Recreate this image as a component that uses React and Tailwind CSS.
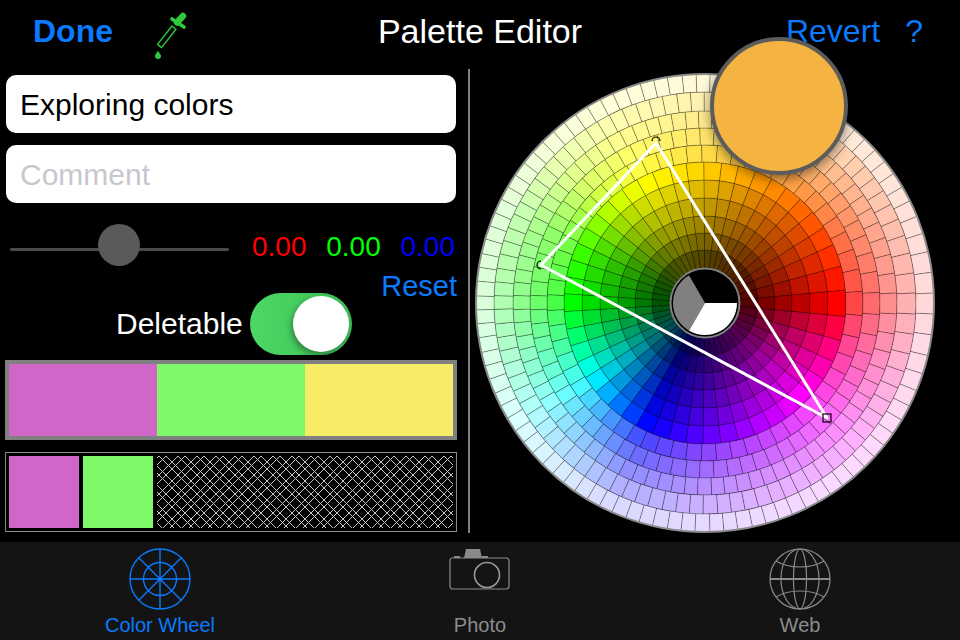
const BLUE = "#0a7aff";

// wheel angle (deg, counter clockwise from the right) -> hue
const HUE_KEYS = [
  [0, 0], [43, 24], [88, 48], [117, 60], [135, 75], [156, 105], [180, 120],
  [210, 175], [245, 240], [270, 262], [317, 300], [340, 330], [360, 360],
];

// inner radius, outer radius, tint (towards white), value, cells
const RINGS = [
  [35, 53, 0, 0.33, 48],
  [53, 70, 0, 0.48, 48],
  [70, 87, 0, 0.62, 48],
  [87, 105, 0, 0.75, 48],
  [105, 123, 0, 0.87, 48],
  [123, 141, 0, 1, 48],
  [141, 158, 0.28, 1, 60],
  [158, 175, 0.42, 1, 72],
  [175, 192, 0.56, 1, 84],
  [192, 211, 0.69, 1, 90],
  [211, 229, 0.85, 1, 96],
];

const hueAt = (angle) => {
  for (let i = 1; i < HUE_KEYS.length; i++) {
    const [a0, h0] = HUE_KEYS[i - 1];
    const [a1, h1] = HUE_KEYS[i];
    if (angle <= a1) return h0 + ((angle - a0) / (a1 - a0)) * (h1 - h0);
  }
  return 0;
};

const cellColor = (hue, tint, value) => {
  const f = (n) => {
    const k = (n + hue / 60) % 6;
    return 1 - Math.max(0, Math.min(k, 4 - k, 1));
  };
  const ch = (n) => Math.round(255 * (f(n) * value * (1 - tint) + tint));
  return `rgb(${ch(5)},${ch(3)},${ch(1)})`;
};

// cells are a bit wider around red
const stepAt = (a) => {
  const d = Math.min(a, 360 - a);
  return 1 + 0.5 * Math.exp(-((d / 25) ** 2));
};

const ringAngles = (count) => {
  let total = 0;
  for (let a = 0; a < 360; a += 0.25) total += 0.25 / stepAt(a);
  const angles = [];
  let acc = 0;
  let next = 0.5;
  for (let a = 0; a < 360; a += 0.25) {
    acc += 0.25 / stepAt(a);
    if ((acc / total) * count >= next) {
      angles.push(a);
      next += 1;
    }
  }
  return angles;
};

const pt = (r, a) => {
  const rad = (a * Math.PI) / 180;
  return `${(230 + r * Math.cos(rad)).toFixed(2)} ${(230 - r * Math.sin(rad)).toFixed(2)}`;
};

const wedge = (r0, r1, a0, a1) =>
  `M${pt(r0, a0)}L${pt(r1, a0)}A${r1} ${r1} 0 0 0 ${pt(r1, a1)}L${pt(r0, a1)}A${r0} ${r0} 0 0 1 ${pt(r0, a0)}Z`;

const ColorWheel = () => {
  const cells = [];
  RINGS.forEach(([r0, r1, tint, value, count]) => {
    const angles = ringAngles(count);
    angles.forEach((a0, i) => {
      const a1 = i === angles.length - 1 ? angles[0] + 360 : angles[i + 1];
      cells.push(
        <path
          key={`${r0}-${i}`}
          d={wedge(r0, r1, a0, a1)}
          fill={cellColor(hueAt(((a0 + a1) / 2) % 360), tint, value)}
          stroke="#000"
          strokeOpacity="0.3"
          strokeWidth="0.8"
        />
      );
    });
  });

  return (
    <svg width="460" height="460" viewBox="0 0 460 460" className="block">
      {cells}
      <circle cx="230" cy="230" r="229" fill="none" stroke="#8a8a8a" strokeWidth="2" />
      {/* brightness disc */}
      <circle cx="230" cy="230" r="35" fill="#000" />
      <path d={`M230 230L${pt(32, 0)}A32 32 0 0 0 ${pt(32, 120)}Z`} fill="#000" />
      <path d={`M230 230L${pt(32, 120)}A32 32 0 0 0 ${pt(32, 240)}Z`} fill="#808080" />
      <path d={`M230 230L${pt(32, 240)}A32 32 0 0 0 ${pt(32, 360)}Z`} fill="#fff" />
      <circle cx="230" cy="230" r="34.5" fill="none" stroke="#808080" strokeWidth="2" />
      {/* picked colors */}
      <path d="M181 70L66 192L352 345Z" fill="none" stroke="#fff" strokeWidth="3" strokeLinejoin="round" />
      <path d="M177 68A4 4 0 0 1 185 68" fill="none" stroke="#000" strokeWidth="1.2" />
      <path d="M66 196A4 4 0 0 1 66 188" fill="none" stroke="#000" strokeWidth="1.2" />
      <rect x="348" y="341" width="8" height="8" fill="none" stroke="#000" strokeWidth="1.2" />
    </svg>
  );
};

const Dropper = () => (
  <svg width="40" height="50" viewBox="150 5 40 50" className="block">
    <path d="M177 24.2L173 21L158.5 39.4L162.5 42.6Z" fill="none" stroke="#2fc83c" strokeWidth="1.4" strokeLinejoin="round" />
    <path d="M173 14L185 22" stroke="#2fc83c" strokeWidth="3.6" strokeLinecap="round" />
    <path d="M178 17.5L184 11" stroke="#2fc83c" strokeWidth="6.4" strokeLinecap="round" />
    <path d="M159 45.5C160 48 162 49.2 162 51A3 3 0 0 1 156 51C156 49.2 158 48 159 45.5Z" fill="#2fc83c" />
  </svg>
);

const Hatch = () => {
  const offsets = [];
  for (let i = 0; i < 52; i++) offsets.push(i * 19, i * 19 + 7);
  return (
    <svg width="296" height="72" viewBox="0 0 296 72" className="block">
      {offsets.map((o) => (
        <g key={o} stroke="#c4c4c4" strokeWidth="1">
          <path d={`M${o - 76} -2L${o} 74`} />
          <path d={`M${o + 4} -2L${o - 72} 74`} />
        </g>
      ))}
    </svg>
  );
};

const WheelIcon = () => (
  <svg width="62" height="62" viewBox="0 0 62 62" fill="none" stroke={BLUE} strokeWidth="1.4" className="block">
    <circle cx="31" cy="31" r="30" />
    <circle cx="31" cy="31" r="16.5" />
    <path d="M31 1V61M1 31H61M10 10L52 52M52 10L10 52" />
    <circle cx="31" cy="31" r="1.5" fill={BLUE} stroke="none" />
  </svg>
);

const PhotoIcon = () => (
  <svg width="62" height="62" viewBox="0 0 62 62" className="block">
    <path d="M15 10L17 1H31L33 10Z" fill="#8a8a8a" />
    <path d="M5 8H11V10H5ZM33 8H39V10H33Z" fill="#8a8a8a" transform="translate(0 0)" />
    <path d="M3 10H57C59 10 60 11 60 13V38C60 40 59 41 57 41H4C2 41 1 40 1 38V13C1 11 2 10 3 10Z" fill="none" stroke="#8a8a8a" strokeWidth="1.2" />
    <circle cx="38" cy="27" r="12.5" fill="none" stroke="#9a9a9a" strokeWidth="1.6" />
  </svg>
);

const GlobeIcon = () => (
  <svg width="62" height="62" viewBox="0 0 62 62" fill="none" stroke="#8a8a8a" strokeWidth="1.2" className="block">
    <circle cx="31" cy="31" r="30" />
    <ellipse cx="31" cy="31" rx="19" ry="30" />
    <ellipse cx="31" cy="31" rx="6.5" ry="30" />
    <path d="M1 31H61" strokeWidth="1.8" />
    <path d="M7 13C20 21 42 21 55 13M7 49C20 41 42 41 55 49" />
  </svg>
);

const TabItem = ({ icon, label, active }) => (
  <div className="flex flex-col items-center">
    {icon}
    <span className={`mt-[3px] text-[20px] leading-[24px] ${active ? "text-[#0a7aff]" : "text-[#8c8c8c]"}`}>
      {label}
    </span>
  </div>
);

export default function App() {
  return (
    <div className="relative w-[960px] h-[640px] overflow-hidden bg-black font-['Liberation_Sans',sans-serif] flex flex-col">
      {/* top bar */}
      <header className="h-[69px] shrink-0 grid grid-cols-3 items-center pb-[8px]">
        <div className="flex items-center pl-[33px]">
          <span className="text-[32px] leading-none font-bold text-[#0a7aff]">Done</span>
          <span className="ml-[36px] mt-[8px]">
            <Dropper />
          </span>
        </div>
        <div className="text-center text-[34px] leading-none text-white">Palette Editor</div>
        <div className="flex justify-end items-center pr-[37px] text-[32px] leading-none text-[#0a7aff]">
          <span>Revert</span>
          <span className="ml-[25px]">?</span>
        </div>
      </header>

      <main className="flex-1 flex">
        <section className="w-[468px] shrink-0 pl-[5px] pt-[6px]">
          <div className="ml-px w-[450px] h-[58px] rounded-[10px] bg-white flex items-center pl-[14px] text-[30px] text-black">
            Exploring colors
          </div>
          <div className="ml-px mt-[12px] w-[450px] h-[58px] rounded-[10px] bg-white flex items-center pl-[14px] text-[30px] text-[#c7c7cd]">
            Comment
          </div>

          <div className="mt-[22px] h-[43px] flex items-center">
            <div className="relative ml-[5px] w-[219px] h-[3px] mt-[6px] rounded-full bg-[#4a4a4a]">
              <div className="absolute left-[88px] top-[-24px] w-[42px] h-[42px] rounded-full bg-[#5a5a5a]" />
            </div>
            <div className="ml-[23px] w-[203px] flex justify-between text-[28px] leading-none">
              <span className="text-[#ff0000]">0.00</span>
              <span className="text-[#00ff00]">0.00</span>
              <span className="text-[#0000ff]">0.00</span>
            </div>
          </div>

          <div className="h-[36px] flex items-center justify-end pr-[11px] text-[29px] leading-none text-[#0a7aff]">
            Reset
          </div>

          <div className="-mt-[11px] h-[62px] flex items-center">
            <span className="ml-[111px] text-[30px] leading-none text-white">Deletable</span>
            <div className="ml-[7px] w-[102px] h-[62px] rounded-full bg-gradient-to-r from-[#4cd964] to-[#3fbf5a] flex items-center justify-end pr-[3px]">
              <div className="w-[56px] h-[56px] rounded-full bg-white shadow-[-2px_3px_6px_rgba(0,0,0,0.35)]" />
            </div>
          </div>

          <div className="mt-[5px] w-[452px] h-[80px] border-4 border-[#808080] flex">
            <div className="flex-1 bg-[#d066c8]" />
            <div className="flex-1 bg-[#80f968]" />
            <div className="flex-1 bg-[#f7ec68]" />
          </div>

          <div className="mt-[12px] w-[452px] h-[80px] border border-[#888888] p-[3px] flex gap-[4px]">
            <div className="w-[70px] bg-[#d066c8]" />
            <div className="w-[70px] bg-[#80f968]" />
            <Hatch />
          </div>
        </section>

        <div className="w-[2px] h-[464px] shrink-0 bg-[#808080]" />

        <div className="ml-[5px] mt-[4px]">
          <ColorWheel />
        </div>
      </main>

      {/* loupe showing the picked color */}
      <div className="absolute left-[710px] top-[37px] w-[138px] h-[138px] rounded-full border-4 border-[#5c5c5c] bg-[#f5b342] shadow-[0_4px_12px_rgba(0,0,0,0.45)]" />

      <nav className="h-[98px] shrink-0 bg-[#141414] grid grid-cols-3 pt-[6px] pl-[0px]">
        <TabItem icon={<WheelIcon />} label="Color Wheel" active />
        <TabItem icon={<PhotoIcon />} label="Photo" />
        <TabItem icon={<GlobeIcon />} label="Web" />
      </nav>
    </div>
  );
}
